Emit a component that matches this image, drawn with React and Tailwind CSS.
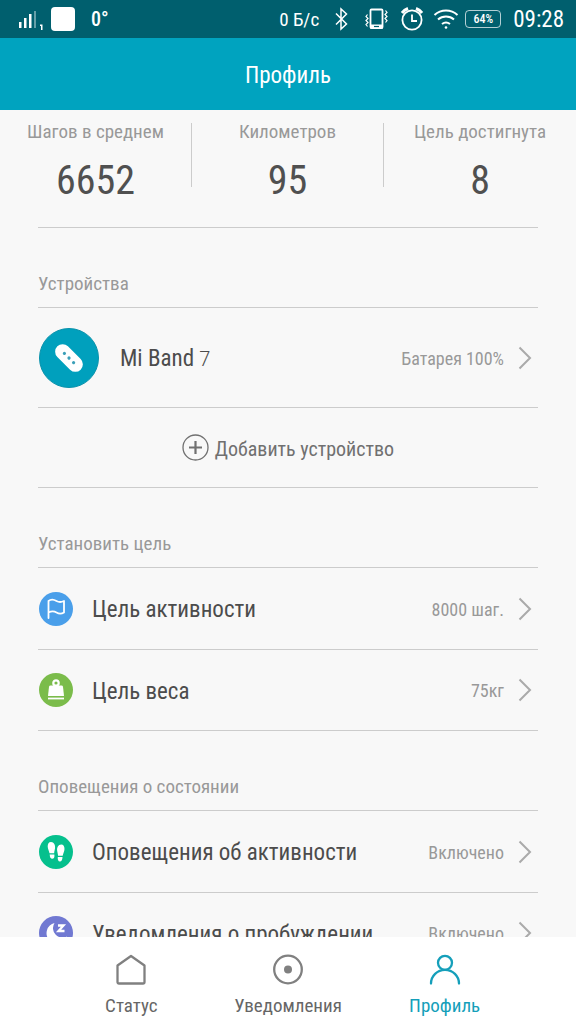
import React from "react";
import clsx from "clsx";

const StatusBar = () => (
  <div className="flex h-[38px] items-center justify-between bg-[#005f6e] pl-[18px] pr-3 text-white">
    <div className="flex items-center">
      <svg className="mt-1 h-5 w-[25px]" viewBox="0 0 25 20" fill="#fff">
        <rect x="1" y="11" width="2.5" height="6" />
        <rect x="6" y="7" width="2.5" height="10" />
        <rect x="11" y="3" width="2.5" height="14" />
        <rect x="16" y="0" width="2" height="17" opacity="0.4" />
        <path d="M22 13.500h2.500v5.500h-1.500v-4h-1z" />
      </svg>
      <div className="ml-2 size-6 rounded-sm bg-white" />
      <span className="ml-4 text-xl leading-6 font-medium">0°</span>
    </div>
    <div className="flex items-center">
      <span className="pt-0.5 text-[19px] leading-6">0 Б/с</span>
      <svg className="ml-4 h-6 w-[13px]" viewBox="0 0 13 24" fill="none" stroke="#fff" strokeWidth="1.5">
        <path d="M1 6.500l10.500 10.500L6 22V2l5.500 5L1 17.500" />
      </svg>
      <svg className="ml-[17px] h-6 w-[23px]" viewBox="0 0 23 24" fill="none" stroke="#fff">
        <rect x="5.5" y="2.5" width="12" height="18.5" rx="1" strokeWidth="1.8" />
        <path d="M5 19.500h13" strokeWidth="4" />
        <path d="M9 19.500h5" stroke="#005f6e" strokeWidth="1.2" />
        <path d="M2.500 7.500l-1.500 2 2 2-2 2 2 2-2 2 1.500 2M20.500 3.500l1.500 2-2 2 2 2-2 2 2 2-1.500 2" strokeWidth="1.2" />
      </svg>
      <svg className="ml-3 size-6" viewBox="0 0 24 24" fill="none" stroke="#fff" strokeWidth="1.8">
        <circle cx="12" cy="13" r="9.600" />
        <path d="M12 7.500V14h5" />
        <path d="M2 6a13 13 0 0 1 6-4.500M22 6a13 13 0 0 0-6-4.500" strokeWidth="3" />
      </svg>
      <svg className="ml-[9px] h-6 w-[26px]" viewBox="0 0 26 24" fill="none" stroke="#fff" strokeWidth="2">
        <path d="M1.500 8a17 17 0 0 1 23 0M5 12.500a12 12 0 0 1 16 0M9 17a6.500 6.500 0 0 1 8 0" />
        <circle cx="13" cy="20.500" r="1.300" fill="#fff" stroke="none" />
      </svg>
      <span className="ml-1.5 flex h-[18px] w-9 items-center justify-center rounded-sm border border-white/70 text-xs font-medium">
        64%
      </span>
      <span className="ml-3 pt-[3px] text-[23px]">09:28</span>
    </div>
  </div>
);

const Stat = ({ label, value }) => (
  <div className="flex h-16 flex-col items-center border-r border-[#cccccc] last:border-r-0">
    <span className="text-[19px] leading-[18px] whitespace-nowrap text-[#999999]">{label}</span>
    <span className="mt-4 text-[40px] leading-[48px] text-[#505050]">{value}</span>
  </div>
);

const Chevron = () => (
  <svg className="ml-[14px] mr-[6px] h-6 w-[14px]" viewBox="0 0 14 24" fill="none" stroke="#aaa" strokeWidth="2">
    <path d="M1.500 1.500L12 12 1.500 22.500" />
  </svg>
);

const BandIcon = () => (
  <svg className="mx-px size-[60px]" viewBox="0 0 60 60">
    <circle cx="30" cy="30" r="29.500" fill="#00a0bd" stroke="#0a92ab" />
    <g transform="rotate(45 30 30)">
      <rect x="13.500" y="22.500" width="33" height="15" rx="7.500" fill="#fff" />
      <circle cx="23.500" cy="30" r="1.600" fill="#3a9fb8" />
      <circle cx="30" cy="30" r="1.600" fill="#3a9fb8" />
      <circle cx="36.500" cy="30" r="1.600" fill="#3a9fb8" />
    </g>
  </svg>
);

const FlagIcon = () => (
  <svg className="size-9" viewBox="0 0 36 36" fill="none">
    <circle cx="18" cy="18" r="17" fill="#4a9fea" />
    <path
      d="M10.500 27V10c3-2.500 5.500-1.500 8 0s4.500 1.500 7.500 0v11.500c-2.500 1.500-5 1.500-7.500 0s-5-1.500-8 0"
      stroke="#fff"
      strokeWidth="1.800"
      strokeLinecap="round"
      strokeLinejoin="round"
    />
  </svg>
);

const WeightIcon = () => (
  <svg className="size-9" viewBox="0 0 36 36" fill="none">
    <circle cx="18" cy="18" r="17" fill="#7bbc4b" />
    <circle cx="18" cy="11" r="2.700" stroke="#fff" strokeWidth="2.200" />
    <path d="M12.500 13.500h11q1.300 0 1.500 1.300L26 24H10l1-9.200q.2-1.300 1.500-1.300z" fill="#fff" />
    <path d="M10 26.500h16" stroke="#fff" strokeWidth="1.800" />
  </svg>
);

const StepsIcon = () => (
  <svg className="size-9" viewBox="0 0 36 36" fill="#fff">
    <circle cx="18" cy="18" r="17" fill="#05c08d" />
    <path d="M13 8c3 0 4.500 3 4 6.500-.3 2-.8 3-.8 4.800h-4.700c-.3-2-1.800-4.300-1.800-6.800S10.700 8 13 8z" />
    <path d="M11.700 20.500h4.700c.3 2.700-.5 4.300-2.100 4.300s-2.600-1.600-2.600-4.300z" />
    <path d="M23.200 10.500c-3 0-4.500 3-4 6.500.3 2 .8 3 .8 4.800h4.700c.3-2 1.800-4.300 1.800-6.800s-1-4.500-3.300-4.500z" />
    <path d="M24.500 23h-4.700c-.3 2.700.5 4.500 2.100 4.500s2.600-1.800 2.600-4.500z" />
  </svg>
);

const SleepIcon = () => (
  <svg className="size-9" viewBox="0 0 36 36">
    <circle cx="18" cy="18" r="17" fill="#7179d2" />
    <path d="M16.500 8a10.500 10.500 0 1 0 12.500 13.500A9.500 9.500 0 0 1 16.500 8z" fill="#fff" />
    <path d="M20 10.500h5.500l-5 5.500h6" fill="none" stroke="#fff" strokeWidth="2.300" />
  </svg>
);

const SectionTitle = ({ children }) => (
  <h2 className="flex h-20 items-end border-b border-[#cccccc] pb-3 text-[19px] leading-[22px] text-[#999999]">
    {children}
  </h2>
);

const Row = ({ icon, title, value, large }) => (
  <button
    className={clsx(
      "flex w-full items-center border-b border-[#cccccc] text-left",
      large ? "h-[100px]" : "h-[82px] last:h-[81px]"
    )}
  >
    {icon}
    <span className={clsx("flex-1 whitespace-nowrap pt-1 text-[23px] text-[#4c4c4c]", large ? "ml-5" : "ml-[18px]")}>
      {title}
    </span>
    <span className="whitespace-nowrap pt-0.5 text-lg text-[#999999]">{value}</span>
    <Chevron />
  </button>
);

const HomeIcon = () => (
  <path d="M2.500 12.500L16 3l13.500 9.500V29q0 1.500-1.500 1.500H4q-1.500 0-1.500-1.500z" />
);

const NoticeIcon = () => (
  <>
    <circle cx="16" cy="16.500" r="13.800" />
    <circle cx="16" cy="16.500" r="4" fill="currentColor" stroke="none" />
  </>
);

const ProfileIcon = () => (
  <>
    <circle cx="16" cy="9.800" r="7" />
    <path d="M2 30.500a14 13.700 0 0 1 28 0" />
  </>
);

const Tab = ({ icon, label, active }) => (
  <a
    href="#"
    className={clsx(
      "flex flex-col items-center pt-4",
      active ? "text-[#159fba]" : "text-[#808080]"
    )}
  >
    <svg className="size-8" viewBox="0 0 32 32" fill="none" stroke="currentColor" strokeWidth="2.300" strokeLinejoin="round" strokeLinecap="round">
      {icon}
    </svg>
    <span className={clsx("mt-[9px] text-[19px] leading-6", !active && "text-[#666666]")}>{label}</span>
  </a>
);

const App = () => {
  return (
    <div className="flex h-screen flex-col bg-[#f8f8f8] font-['Roboto_Condensed','Liberation_Sans_Narrow','Roboto',sans-serif]">
      <StatusBar />
      <header className="flex h-[72px] items-center justify-center bg-[#00a3bf]">
        <h1 className="pt-1 text-[23px] text-white">Профиль</h1>
      </header>
      <main className="min-h-0 flex-1 overflow-y-auto [scrollbar-width:none]">
        <div className="grid grid-cols-3 pt-[13px]">
          <Stat label="Шагов в среднем" value="6652" />
          <Stat label="Километров" value="95" />
          <Stat label="Цель достигнута" value="8" />
        </div>
        <div className="mx-[38px] mt-10 border-t border-[#cccccc]">
          <section>
            <SectionTitle>Устройства</SectionTitle>
            <Row
              large
              icon={<BandIcon />}
              title={
                <>
                  Mi Band <span className="font-['Roboto'] text-xl font-light">7</span>
                </>
              }
              value="Батарея 100%"
            />
            <button className="flex h-20 w-full items-center justify-center gap-1.5 border-b border-[#cccccc] text-xl text-[#707070]">
              <svg className="size-[27px]" viewBox="0 0 27 27" fill="none" stroke="currentColor">
                <circle cx="13.500" cy="13.500" r="12.500" strokeWidth="1.300" />
                <path d="M7 13.500h13M13.500 7v13" strokeWidth="2.200" />
              </svg>
              <span className="pt-0.5">Добавить устройство</span>
            </button>
          </section>
          <section>
            <SectionTitle>Установить цель</SectionTitle>
            <Row icon={<FlagIcon />} title="Цель активности" value="8000 шаг." />
            <Row icon={<WeightIcon />} title="Цель веса" value="75кг" />
          </section>
          <section>
            <SectionTitle>Оповещения о состоянии</SectionTitle>
            <Row icon={<StepsIcon />} title="Оповещения об активности" value="Включено" />
            <Row icon={<SleepIcon />} title="Уведомления о пробуждении" value="Включено" />
          </section>
        </div>
      </main>
      <nav className="grid h-[87px] grid-cols-3 bg-white px-[53px]">
        <Tab icon={<HomeIcon />} label="Статус" />
        <Tab icon={<NoticeIcon />} label="Уведомления" />
        <Tab active icon={<ProfileIcon />} label="Профиль" />
      </nav>
    </div>
  );
};

export default App;
